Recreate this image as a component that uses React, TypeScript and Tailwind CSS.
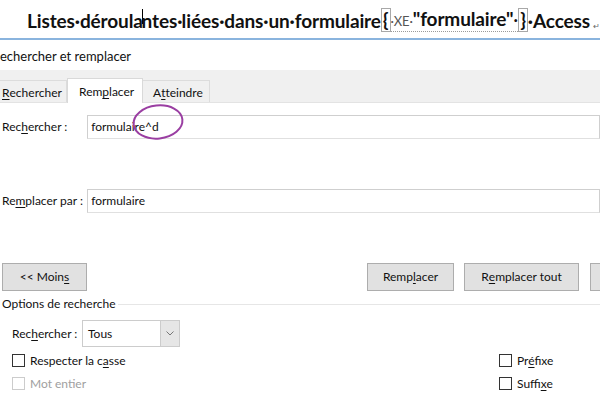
const ui = { fontFamily: '"Lato", "Liberation Sans", sans-serif' };
const doc = { fontFamily: '"Lato", "Open Sans", sans-serif' };

function U({ children }: { children: string }) {
  return <span className="underline decoration-1 underline-offset-[2px]">{children}</span>;
}

function Btn({ children, className = "" }: { children?: React.ReactNode; className?: string }) {
  return (
    <div
      className={`flex h-[28px] shrink-0 items-center justify-center border border-[#adadad] bg-[#e1e1e1] text-[12px] ${className}`}
    >
      {children}
    </div>
  );
}

function Check({ children, disabled = false }: { children: React.ReactNode; disabled?: boolean }) {
  return (
    <div className={`flex h-[23px] items-center gap-[5px] text-[12px] ${disabled ? "text-[#a0a0a0]" : ""}`}>
      <span
        className={`h-[13px] w-[13px] border bg-white ${disabled ? "border-[#cccccc]" : "border-[#333333]"}`}
      />
      <span>{children}</span>
    </div>
  );
}

function Field({ label, value }: { label: React.ReactNode; value: string }) {
  return (
    <div className="flex items-center">
      <div className="w-[90px] pl-[2px] text-[12px]">{label}</div>
      <div className="flex h-[24px] w-[530px] items-center border border-[#cfcfcf] border-b-[#e0e0e0] bg-white pl-[3px] text-[12px]">
        {value}
      </div>
    </div>
  );
}

export default function App() {
  return (
    <div className="relative h-[396px] w-[600px] overflow-hidden bg-white text-[#111]" style={ui}>
      {/* document line */}
      <div
        className="flex h-[40px] items-end whitespace-nowrap border-b-2 border-[#8ab4de] pb-[6px] pl-[27px] text-[19px] font-bold leading-[22px] tracking-[-0.12px]"
        style={doc}
      >
        <span>Listes·déroula</span>
        <span className="-mx-px inline-block h-[15px] w-px self-center bg-black" />
        <span>ntes·liées·dans·un·formulaire</span>
        <span className="inline-block border border-[#a8a8a8] px-px leading-[22px]">{"{"}</span>
        <span className="border-b border-dotted border-[#9a9a9a] leading-[20px]">
          <span className="text-[13px] font-normal text-[#555]">·XE·</span>
          <span>"formulaire"</span>
          <span className="font-normal">·</span>
        </span>
        <span className="inline-block border border-[#a8a8a8] px-px leading-[22px]">{"}"}</span>
        <span>·Access</span>
        <span className="ml-[3px] text-[8px] font-normal leading-[12px] tracking-normal text-[#666]">↵</span>
      </div>

      {/* dialog title */}
      <div className="flex h-[30px] items-center pt-[3px] text-[13px]">echercher et remplacer</div>

      {/* tabs */}
      <div className="flex h-[33px] items-end border-b border-[#e3e3e3] bg-[#f0f0f0] text-[12px]">
        <div className="flex h-[22px] w-[67px] items-center border-r border-t border-[#dcdcdc] pl-[2px] pt-[2px]">
          <U>R</U>echercher
        </div>
        <div className="-mb-px flex h-[25px] w-[76px] items-center border-x border-t border-[#d9d9d9] bg-white pl-[11px] pt-[2px]">
          Rem<U>p</U>lacer
        </div>
        <div className="flex h-[22px] w-[67px] items-center border-r border-t border-[#dcdcdc] pl-[10px] pt-[2px]">
          A<U>t</U>teindre
        </div>
      </div>

      {/* body */}
      <div className="flex flex-col pt-[12px]">
        <Field
          label={
            <>
              Rec<U>h</U>ercher :
            </>
          }
          value="formulaire^d"
        />
        <div className="mt-[50px]">
          <Field
            label={
              <>
                Re<U>m</U>placer par :
              </>
            }
            value="formulaire"
          />
        </div>

        <div className="mt-[50px] flex w-[700px] pl-[2px]">
          <Btn className="w-[85px]">
            {"<< Moin"}
            <U>s</U>
          </Btn>
          <Btn className="ml-[280px] w-[87px]">
            Remp<U>l</U>acer
          </Btn>
          <Btn className="ml-[10px] w-[115px]">
            R<U>e</U>mplacer tout
          </Btn>
          <Btn className="ml-[11px] w-[90px]" />
        </div>

        <div className="mt-[5px] flex h-[16px] items-center text-[12px]">
          <span className="pl-[2px]">Options de recherche</span>
          <span className="ml-[2px] h-px flex-1 bg-[#e6e6e6]" />
        </div>

        <div className="mt-[8px] flex items-center pl-[12px] text-[12px]">
          <span className="w-[70px]">
            Rec<U>h</U>ercher :
          </span>
          <div className="flex h-[27px] w-[98px] border border-[#cccccc] bg-white">
            <span className="flex flex-1 items-center pl-[5px]">Tous</span>
            <span className="flex w-[19px] items-center justify-center border-l border-[#cccccc] bg-[#e6e6e6]">
              <svg width="8" height="5" viewBox="0 0 8 5">
                <path d="M0.5 0.5 L4 4 L7.5 0.5" fill="none" stroke="#777" strokeWidth="1" />
              </svg>
            </span>
          </div>
        </div>

        <div className="mt-[2px] grid grid-cols-[487px_1fr] pl-[12px]">
          <Check>
            Respecter la c<U>a</U>sse
          </Check>
          <Check>
            Pr<U>é</U>fixe
          </Check>
          <Check disabled>Mot entier</Check>
          <Check>
            Suffi<U>x</U>e
          </Check>
        </div>
      </div>

      {/* annotation circle */}
      <svg className="absolute left-[131px] top-[103px]" width="56" height="41" viewBox="0 0 56 41">
        <ellipse
          cx="27"
          cy="19"
          rx="24.5"
          ry="16.5"
          transform="rotate(-6 27 19)"
          fill="none"
          stroke="#9a3ea2"
          strokeWidth="2"
        />
      </svg>
    </div>
  );
}
